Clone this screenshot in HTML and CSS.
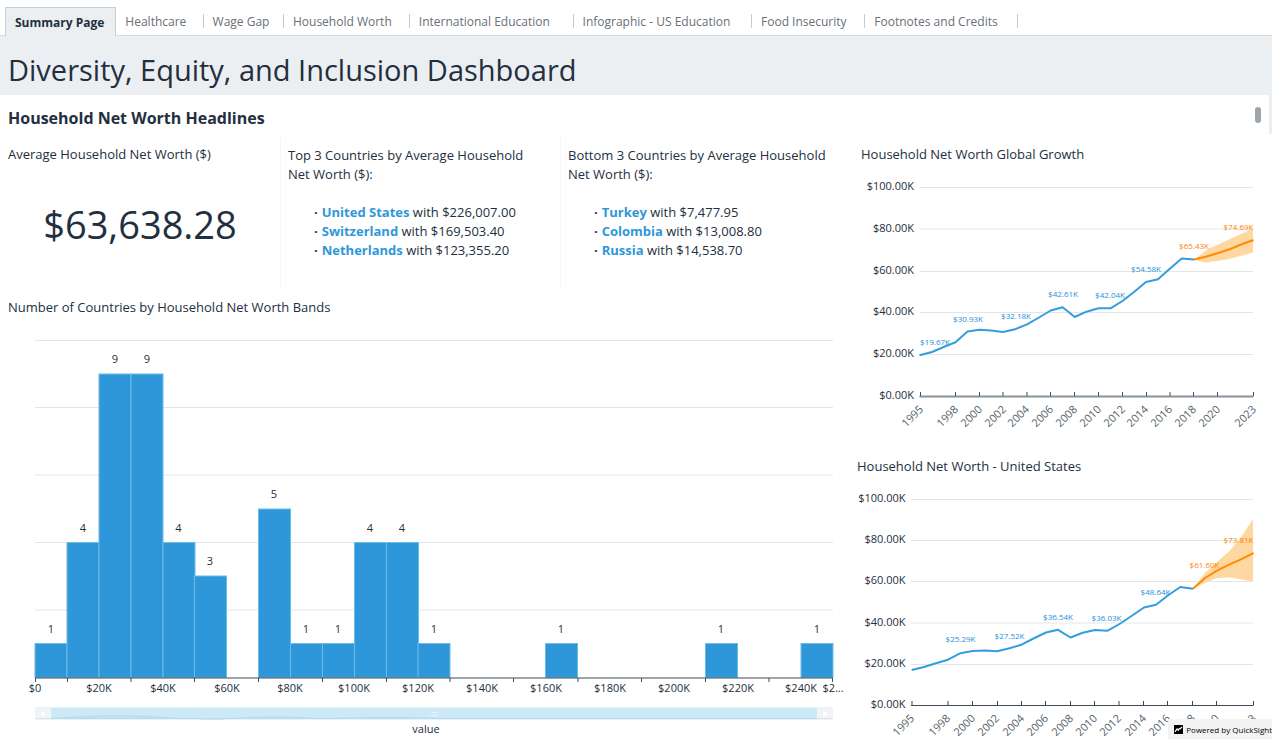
FILE: index.html
```html
<!DOCTYPE html>
<html lang="en">
<head>
<meta charset="utf-8">
<meta name="viewport" content="width=device-width, initial-scale=1">
<title>Diversity, Equity, and Inclusion Dashboard</title>
<link rel="stylesheet" href="styles.css">
</head>
<body>
<nav class="tabs" aria-label="Sheets">
  <button class="tab tab-active" data-label="Summary Page" aria-current="page">Summary Page</button>
  <button class="tab" data-label="Healthcare">Healthcare</button>
  <button class="tab" data-label="Wage Gap">Wage Gap</button>
  <button class="tab" data-label="Household Worth">Household Worth</button>
  <button class="tab" data-label="International Education">International Education</button>
  <button class="tab" data-label="Infographic - US Education">Infographic - US Education</button>
  <button class="tab" data-label="Food Insecurity">Food Insecurity</button>
  <button class="tab" data-label="Footnotes and Credits">Footnotes and Credits</button>
</nav>
<header class="banner"><h1>Diversity, Equity, and Inclusion Dashboard</h1></header>
<main>
  <div class="section-head">
    <h2>Household Net Worth Headlines</h2>
    <span class="thumb"></span>
  </div>
  <div class="board">
    <div class="left">
      <div class="cards">
        <section class="card">
          <h3>Average Household Net Worth ($)</h3>
          <p class="kpi">$63,638.28</p>
        </section>
        <section class="card card-text">
          <p>Top 3 Countries by Average Household Net Worth ($):</p>
          <ul>
            <li><b>United States</b> with $226,007.00</li>
            <li><b>Switzerland</b> with $169,503.40</li>
            <li><b>Netherlands</b> with $123,355.20</li>
          </ul>
        </section>
        <section class="card card-text">
          <p>Bottom 3 Countries by Average Household Net Worth ($):</p>
          <ul>
            <li><b>Turkey</b> with $7,477.95</li>
            <li><b>Colombia</b> with $13,008.80</li>
            <li><b>Russia</b> with $14,538.70</li>
          </ul>
        </section>
      </div>
      <section class="histogram">
        <h3>Number of Countries by Household Net Worth Bands</h3>
        <svg class="chart" viewBox="0 322 848 420" role="img" aria-label="Number of countries by net worth band">
          <path class="grid" d="M35 340.5H833M35 407.5H833M35 475H833M35 542.5H833M35 610H833"/>
          <g class="bars">
            <rect x="35" y="643.5" width="32" height="34"/>
            <rect x="67" y="542.5" width="32" height="135"/>
            <rect x="99" y="374" width="32" height="303.5"/>
            <rect x="131" y="374" width="32" height="303.5"/>
            <rect x="163" y="542.5" width="32" height="135"/>
            <rect x="194.5" y="576" width="32" height="101.5"/>
            <rect x="258.5" y="509" width="32" height="168.5"/>
            <rect x="290.5" y="643.5" width="32" height="34"/>
            <rect x="322.5" y="643.5" width="32" height="34"/>
            <rect x="354.5" y="542.5" width="32" height="135"/>
            <rect x="386.5" y="542.5" width="32" height="135"/>
            <rect x="418" y="643.5" width="32" height="34"/>
            <rect x="545.5" y="643.5" width="32" height="34"/>
            <rect x="705.5" y="643.5" width="32" height="34"/>
            <rect x="801" y="643.5" width="32" height="34"/>
          </g>
          <path class="axis" d="M35 678H833"/>
          <path class="ticks" d="M35.5 678v4M67.5 678v4M131 678v4M194.5 678v4M258.500 678v4M322.500 678v4M386.500 678v4M450 678v4M513.500 678v4M578 678v4M641.500 678v4M705.500 678v4M769 678v4M832.500 678v4"/>
          <g class="value mid">
            <text x="51" y="633">1</text><text x="83" y="532">4</text><text x="115" y="363">9</text><text x="147" y="363">9</text>
            <text x="178.500" y="532">4</text><text x="210" y="565">3</text><text x="274" y="498">5</text><text x="306" y="633">1</text>
            <text x="338" y="633">1</text><text x="370" y="532">4</text><text x="402" y="532">4</text><text x="434" y="633">1</text>
            <text x="561" y="633">1</text><text x="721" y="633">1</text><text x="817" y="633">1</text>
          </g>
          <g class="label mid">
            <text x="35" y="692">$0</text><text x="99" y="692">$20K</text><text x="163" y="692">$40K</text><text x="227" y="692">$60K</text>
            <text x="290" y="692">$80K</text><text x="354" y="692">$100K</text><text x="418" y="692">$120K</text><text x="482" y="692">$140K</text>
            <text x="546" y="692">$160K</text><text x="610" y="692">$180K</text><text x="674" y="692">$200K</text><text x="738" y="692">$220K</text>
            <text x="801" y="692">$240K</text><text x="833" y="692">$2...</text>
          </g>
          <rect x="35" y="707.500" width="798" height="12" fill="#cde9f7"/>
          <path d="M51 718Q115 712 170 717T230 718Q275 714 320 718Q390 715 450 718Z" fill="#c0dfec"/>
          <path d="M35 718.500H833" stroke="#bddceb"/>
          <path d="M35 707.500h16v12H35zM817 707.500h16v12h-16z" fill="#f1f4f5"/>
          <path d="M35 718.500h16M817 718.500h16" stroke="#dce2e5"/>
          <path d="M41 712h4v4h-4zM823 712h4v4h-4z" fill="#fff"/>
          <path d="M431.500 712.500h6M431.500 715.500h6" stroke="#f4fbff" stroke-dasharray="1.500 1"/>
          <text class="label axis-name mid" x="426" y="733">value</text>
        </svg>
      </section>
    </div>
    <div class="right">
      <section class="line-panel">
        <h3>Household Net Worth Global Growth</h3>
        <svg class="chart" viewBox="848 172 424 274" role="img" aria-label="Household net worth global growth, 1995 to 2023">
          <path class="grid" d="M920 187.500H1253M920 229H1253M920 271.500H1253M920 312.500H1253M920 354.500H1253"/>
          <path class="axis axis-soft" d="M919.500 396.500H1253.500"/>
          <path class="ticks" d="M920.500 396v-4M955.500 396v-4M979.500 396v-4M1003 396v-4M1027 396v-4M1050.500 396v-4M1074.500 396v-4M1098.500 396v-4M1122.500 396v-4M1146.500 396v-4M1170 396v-4M1193.500 396v-4M1217.500 396v-4M1253.500 396v-4"/>
          <path class="band" d="M1194 259.500L1208 249L1253 228.500V252.500L1229.500 259L1205.500 262.700Z"/>
          <polyline class="series" points="919.500,355.300 932,352 943.700,347 955.500,342.300 967.500,331.500 979.500,329.700 991,330.500 1003,332 1015,329.300 1027,324.300 1039,317.500 1050.700,310.500 1062.700,307.200 1074.700,317 1086.500,311.700 1098.500,308.300 1110.500,308.300 1122.500,301 1134,292 1146,282 1158,279.300 1169.500,269 1181.700,258.500 1194,259.500"/>
          <polyline class="series forecast" points="1194,259.500 1205.500,256.800 1217.500,253.300 1229.500,249.300 1241,244.500 1253.500,240"/>
          <g class="label end">
            <text x="914" y="190">$100.00K</text><text x="914" y="232">$80.00K</text><text x="914" y="274">$60.00K</text>
            <text x="914" y="315">$40.00K</text><text x="914" y="357">$20.00K</text><text x="914" y="399">$0.00K</text>
          </g>
          <g class="point mid">
            <text x="935" y="345">$19.67K</text><text x="968" y="322">$30.93K</text><text x="1016" y="318.500">$32.18K</text>
            <text x="1063" y="297">$42.61K</text><text x="1110" y="298">$42.04K</text><text x="1146" y="272">$54.58K</text>
            <text class="hot" x="1194" y="249">$65.43K</text><text class="hot" x="1238.500" y="230">$74.69K</text>
          </g>
          <g class="year end">
            <text transform="translate(924 410) rotate(-45)">1995</text><text transform="translate(959 410) rotate(-45)">1998</text>
            <text transform="translate(983 410) rotate(-45)">2000</text><text transform="translate(1007 410) rotate(-45)">2002</text>
            <text transform="translate(1030 410) rotate(-45)">2004</text><text transform="translate(1054 410) rotate(-45)">2006</text>
            <text transform="translate(1078 410) rotate(-45)">2008</text><text transform="translate(1102 410) rotate(-45)">2010</text>
            <text transform="translate(1126 410) rotate(-45)">2012</text><text transform="translate(1149 410) rotate(-45)">2014</text>
            <text transform="translate(1173 410) rotate(-45)">2016</text><text transform="translate(1197 410) rotate(-45)">2018</text>
            <text transform="translate(1221 410) rotate(-45)">2020</text><text transform="translate(1257 410) rotate(-45)">2023</text>
          </g>
        </svg>
      </section>
      <section class="line-panel line-panel-us">
        <h3>Household Net Worth - United States</h3>
        <svg class="chart" viewBox="848 484 424 262" role="img" aria-label="Household net worth in the United States, 1995 to 2023">
          <path class="grid" d="M911 499.500H1253M911 540.500H1253M911 581.500H1253M911 623H1253M911 664.500H1253"/>
          <path class="axis" d="M911 705.500H1253.500"/>
          <path class="ticks" d="M912 705v-4M948 705v-4M972.500 705v-4M997.500 705v-4M1021.500 705v-4M1045.500 705v-4M1070.500 705v-4M1094.500 705v-4M1119 705v-4M1143.500 705v-4M1167.500 705v-4M1192.500 705v-4M1216.500 705v-4M1253.500 705v-4"/>
          <path class="band" d="M1193 588.500L1205 573L1217 562L1229.500 551L1241 537L1253 519V581.500L1229 577.300L1217 578L1205 583Z"/>
          <polyline class="series" points="911.700,670 924,667 936,663.300 948,659.700 960.500,653.200 972.500,651 985,650.500 997,651.200 1009.500,648.300 1021.500,644.700 1033.500,638.500 1046,632.500 1058,629.800 1070.500,637.500 1082.700,632.800 1095,630 1107.300,630.800 1119.500,624 1131.500,616 1144,607.500 1156,604.700 1168.500,595 1180.300,587 1193,588.700"/>
          <polyline class="series forecast" points="1193,588.700 1205,578 1217,570.700 1229,564.700 1241,559.300 1253.500,553"/>
          <g class="label end">
            <text x="905.500" y="502">$100.00K</text><text x="905.500" y="543">$80.00K</text><text x="905.500" y="584">$60.00K</text>
            <text x="905.500" y="626">$40.00K</text><text x="905.500" y="667">$20.00K</text><text x="905.500" y="708">$0.00K</text>
          </g>
          <g class="point mid">
            <text x="960.500" y="642">$25.29K</text><text x="1009.500" y="638.500">$27.52K</text><text x="1058" y="619.500">$36.54K</text>
            <text x="1106.500" y="621">$36.03K</text><text x="1155.500" y="595">$48.64K</text>
            <text class="hot" x="1204.500" y="568">$61.60K</text><text class="hot" x="1238.500" y="543">$73.81K</text>
          </g>
          <g class="year end">
            <text transform="translate(915 719) rotate(-45)">1995</text><text transform="translate(951 719) rotate(-45)">1998</text>
            <text transform="translate(976 719) rotate(-45)">2000</text><text transform="translate(1000 719) rotate(-45)">2002</text>
            <text transform="translate(1025 719) rotate(-45)">2004</text><text transform="translate(1049 719) rotate(-45)">2006</text>
            <text transform="translate(1074 719) rotate(-45)">2008</text><text transform="translate(1098 719) rotate(-45)">2010</text>
            <text transform="translate(1122 719) rotate(-45)">2012</text><text transform="translate(1147 719) rotate(-45)">2014</text>
            <text transform="translate(1171 719) rotate(-45)">2016</text><text transform="translate(1196 719) rotate(-45)">2018</text>
            <text transform="translate(1220 719) rotate(-45)">2020</text><text transform="translate(1257 719) rotate(-45)">2023</text>
          </g>
        </svg>
      </section>
    </div>
  </div>
</main>
<a class="powered" href="#">
  <svg viewBox="0 0 9 9" aria-hidden="true"><rect width="9" height="9" rx="0.500"/><path d="M1 6.800L3 4L4.300 5.200L5.300 3.500L6.200 3.800L8 1.800" fill="none" stroke="#fff" stroke-width="1.200"/></svg>
  Powered by QuickSight
</a>
</body>
</html>
```

FILE: styles.css
```css
* { box-sizing: border-box; }

body {
  margin: 0;
  position: relative;
  background: #fff;
  color: #232f3e;
  font-family: "Open Sans", "Noto Sans", sans-serif;
  font-size: 13px;
  overflow-x: hidden;
}

h1, h2, h3, p, ul { margin: 0; padding: 0; }

.tabs {
  display: flex;
  align-items: flex-end;
  height: 36px;
  padding-left: 5px;
  border-bottom: 1px solid #d5dbdf;
}

.tab {
  display: flex;
  flex-direction: column;
  justify-content: center;
  align-items: flex-start;
  flex: none;
  height: 14px;
  margin: 0 0 7px;
  padding: 2px 11px 0 9px;
  border: 0;
  border-right: 1px solid #c3cbd0;
  background: none;
  color: #687078;
  font: 12px/16px "Open Sans", "Noto Sans", sans-serif;
  white-space: nowrap;
}

/* Reserves the bold width so that tabs keep their size when selected. */
.tab::after {
  content: attr(data-label);
  height: 0;
  overflow: hidden;
  visibility: hidden;
  font-weight: 700;
}

.tab-active {
  height: 29px;
  margin-bottom: -1px;
  border: 1px solid #c8d0d5;
  border-bottom: 0;
  background: #ebeff2;
  color: #232f3e;
  font-weight: 700;
}

.banner {
  padding: 14px 8px 5px;
  background: #ebeff2;
}

.banner h1 {
  font-size: 29px;
  line-height: 40px;
  font-weight: 400;
}

.section-head {
  display: flex;
  justify-content: space-between;
  height: 39px;
  padding: 12px 8px 0;
  border-right: 3px solid #ebeff2;
}

.section-head h2 {
  font-size: 16px;
  line-height: 22px;
}

.thumb {
  width: 6px;
  height: 16px;
  border-radius: 3px;
  background: #9ba5aa;
}

.board {
  display: grid;
  grid-template-columns: 2fr 1fr;
}

.cards {
  display: grid;
  grid-template-columns: 280fr 280fr 288fr;
  height: 154px;
}

.card {
  padding: 10px 8px 0;
}

.card + .card { border-left: 1px solid #f5f6f7; padding-left: 7px; }

h3 {
  font-size: 13px;
  line-height: 20px;
  font-weight: 400;
}

.kpi {
  margin-top: 33px;
  text-align: center;
  font-size: 38px;
  line-height: 54px;
}

.card-text {
  padding-top: 12px;
  padding-right: 20px;
  line-height: 19px;
}

.card-text ul {
  margin-top: 19px;
  padding-left: 26px;
  list-style: none;
}

.card-text li::before {
  content: "·";
  margin-right: 4px;
  font-weight: 700;
}

.card-text b { color: #2e97da; }

.histogram { padding-top: 9px; }
.histogram h3 { padding: 0 8px; height: 25px; }

.chart {
  display: block;
  width: 100%;
  height: auto;
}

.line-panel { padding-top: 10px; }
.line-panel h3 { padding-left: 13px; height: 28px; }
.line-panel-us h3 { padding-left: 9px; }

.grid { stroke: #e3e6e8; fill: none; }
.axis { stroke: #3d4c58; }
.axis-soft { stroke: #87929a; stroke-width: 2; }
.ticks { stroke: #3d4c58; }
.bars rect { fill: #2e97da; stroke: #6cbce6; }
.series { fill: none; stroke: #349ddd; stroke-width: 2; stroke-linejoin: round; }
.forecast { stroke: #ff8c00; }
.band { fill: #ffd7a0; }
.mid { text-anchor: middle; }
.end { text-anchor: end; }
.label, .value { font-size: 11px; fill: #232f3e; }
.point { font-size: 8px; font-weight: 500; fill: #2491d8; }
.hot { fill: #ff8200; }
.year { font-size: 11px; fill: #545f69; }

.powered {
  position: absolute;
  right: 0;
  bottom: 7px;
  display: flex;
  align-items: center;
  gap: 3px;
  height: 20px;
  padding-left: 6px;
  background: #f3f3f3;
  color: #000;
  font-size: 8px;
  text-decoration: none;
  white-space: nowrap;
}

.powered svg { width: 9px; height: 9px; }
```
